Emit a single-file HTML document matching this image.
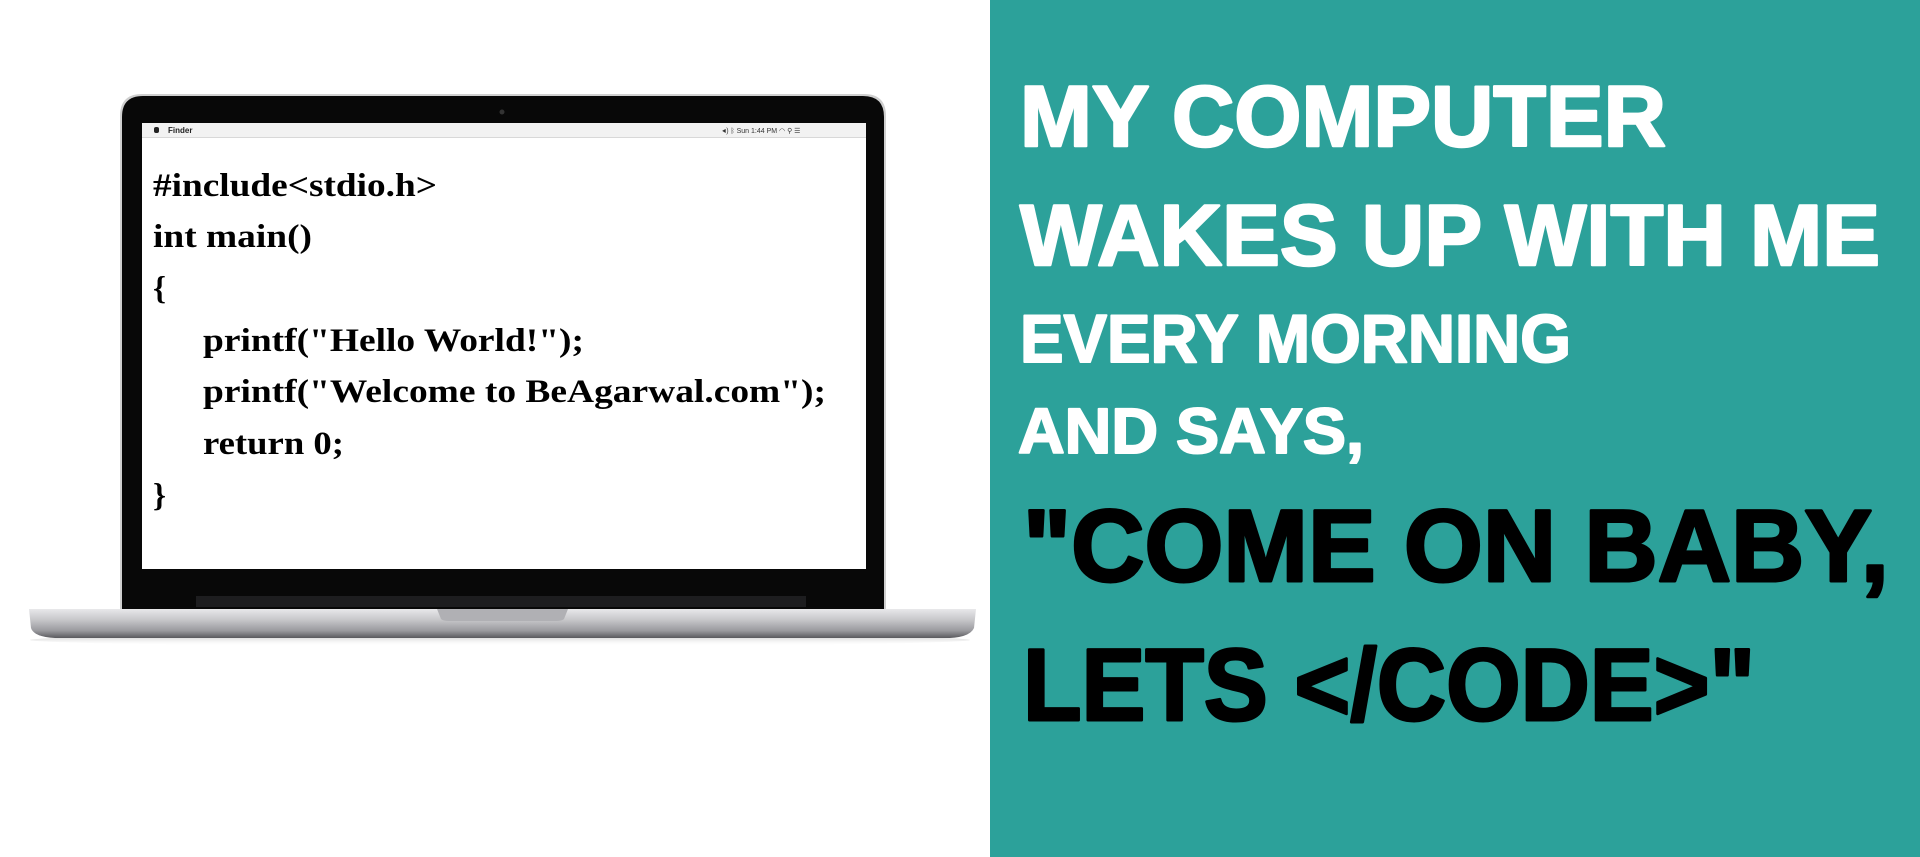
<!DOCTYPE html>
<html><head><meta charset="utf-8"><style>
html,body{margin:0;padding:0;width:1920px;height:857px;overflow:hidden;background:#fff}
svg{display:block}
</style></head><body>
<svg width="1920" height="857" viewBox="0 0 1920 857" xmlns="http://www.w3.org/2000/svg">
<defs>
<linearGradient id="base" x1="0" y1="0" x2="0" y2="1">
<stop offset="0" stop-color="#e8e8ea"/><stop offset="0.35" stop-color="#c9c9cc"/><stop offset="0.75" stop-color="#9a9a9e"/><stop offset="1" stop-color="#5a5a5e"/>
</linearGradient>
<linearGradient id="sh" x1="0" y1="0" x2="0" y2="1">
<stop offset="0" stop-color="#888" stop-opacity="0.6"/><stop offset="1" stop-color="#fff" stop-opacity="0"/>
</linearGradient>
</defs>
<rect x="990" y="0" width="930" height="857" fill="#2ca19a"/>
<path d="M120 609 L120 116 Q120 94 142 94 L864 94 Q886 94 886 116 L886 609 Z" fill="#cfcfcf"/>
<path d="M122 609 L122 117 Q122 96 143 96 L863 96 Q884 96 884 117 L884 609 Z" fill="#080808"/>
<circle cx="502" cy="112" r="2.5" fill="#333"/>
<rect x="142" y="123" width="724" height="446" fill="#fff"/>
<rect x="142" y="123" width="724" height="14" fill="#f2f2f2"/>
<rect x="142" y="137" width="724" height="1" fill="#d8d8d8"/>
<rect x="154" y="127" width="5" height="6" rx="2" fill="#222"/>
<text x="168" y="133" font-family="Liberation Sans,sans-serif" font-size="8" font-weight="bold" fill="#222">Finder</text>
<text x="722" y="133" font-family="Liberation Sans,sans-serif" font-size="7" fill="#333">◀)  ᛒ  Sun 1:44 PM  ◠  ⚲  ☰</text>
<rect x="196" y="596" width="610" height="11" fill="#1d1d1f"/>
<ellipse cx="500" cy="640" rx="470" ry="6" fill="url(#sh)"/>
<path d="M29 609 L976 609 L974 628 Q970 637 950 638 L55 638 Q34 637 31 628 Z" fill="url(#base)"/>
<path d="M437 609 L568 609 L564 619 Q562 621 556 621 L449 621 Q443 621 441 619 Z" fill="#b0b0b4"/>
<g font-family="Liberation Serif,serif" font-weight="bold" font-size="33" fill="#000">
<text x="153" y="196" textLength="284" lengthAdjust="spacingAndGlyphs">#include&lt;stdio.h&gt;</text>
<text x="153" y="247" textLength="159" lengthAdjust="spacingAndGlyphs">int main()</text>
<text x="153" y="299">{</text>
<text x="203" y="351" textLength="381" lengthAdjust="spacingAndGlyphs">printf("Hello World!");</text>
<text x="203" y="402" textLength="623" lengthAdjust="spacingAndGlyphs">printf("Welcome to BeAgarwal.com");</text>
<text x="203" y="454" textLength="141" lengthAdjust="spacingAndGlyphs">return 0;</text>
<text x="153" y="506">}</text>
</g>
<g font-family="Liberation Sans,sans-serif" font-weight="bold" stroke-linejoin="round">
<text x="1020" y="146" font-size="86" fill="#fff" stroke="#fff" stroke-width="2.5" textLength="646" lengthAdjust="spacingAndGlyphs">MY COMPUTER</text>
<text x="1020" y="265" font-size="86" fill="#fff" stroke="#fff" stroke-width="2.5" textLength="860" lengthAdjust="spacingAndGlyphs">WAKES UP WITH ME</text>
<text x="1020" y="362" font-size="68" fill="#fff" stroke="#fff" stroke-width="2" textLength="551" lengthAdjust="spacingAndGlyphs">EVERY MORNING</text>
<text x="1018" y="453" font-size="64" fill="#fff" stroke="#fff" stroke-width="2" textLength="346" lengthAdjust="spacingAndGlyphs">AND SAYS,</text>
<text x="1023" y="581" font-size="102" fill="#000" stroke="#000" stroke-width="3" textLength="866" lengthAdjust="spacingAndGlyphs">"COME ON BABY,</text>
<text x="1023" y="720" font-size="102" fill="#000" stroke="#000" stroke-width="3" textLength="732" lengthAdjust="spacingAndGlyphs">LETS &lt;/CODE&gt;"</text>
</g>
</svg>
</body></html>
